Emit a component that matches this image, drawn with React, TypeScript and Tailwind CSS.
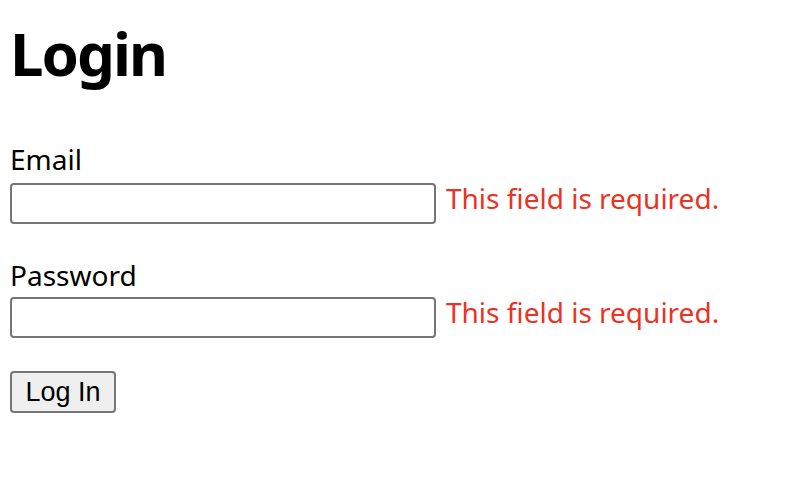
export default function App() {
  return (
    <div className="min-h-screen bg-white px-[10px] pt-[23px] font-['Noto_Sans','Open_Sans',sans-serif] text-black">
      <h1 className="text-[60px] font-bold leading-none tracking-[-2px]">Login</h1>

      <form className="mt-[59px] flex flex-col" onSubmit={(e) => e.preventDefault()}>
        <label htmlFor="email" className="text-[28px] leading-[34px]">Email</label>
        <div className="mt-[7px] flex items-start gap-[10px]">
          <input
            id="email"
            type="email"
            className="h-[41px] w-[426px] rounded-[4px] border-2 border-[#767676] bg-white px-2 outline-none"
          />
          <span className="-mt-[2px] text-[28px] leading-[34px] text-[#ea3323]">This field is required.</span>
        </div>

        <label htmlFor="password" className="mt-[34px] text-[28px] leading-[34px]">Password</label>
        <div className="mt-[5px] flex items-start gap-[10px]">
          <input
            id="password"
            type="password"
            className="h-[41px] w-[426px] rounded-[4px] border-2 border-[#767676] bg-white px-2 outline-none"
          />
          <span className="-mt-[2px] text-[28px] leading-[34px] text-[#ea3323]">This field is required.</span>
        </div>

        <div className="mt-[33px]">
          <button
            type="submit"
            className="h-[42px] w-[106px] rounded-[4px] border-2 border-[#767676] bg-[#efefef] font-['Liberation_Sans',Arial,sans-serif] text-[27px] leading-none"
          >
            Log In
          </button>
        </div>
      </form>
    </div>
  );
}
